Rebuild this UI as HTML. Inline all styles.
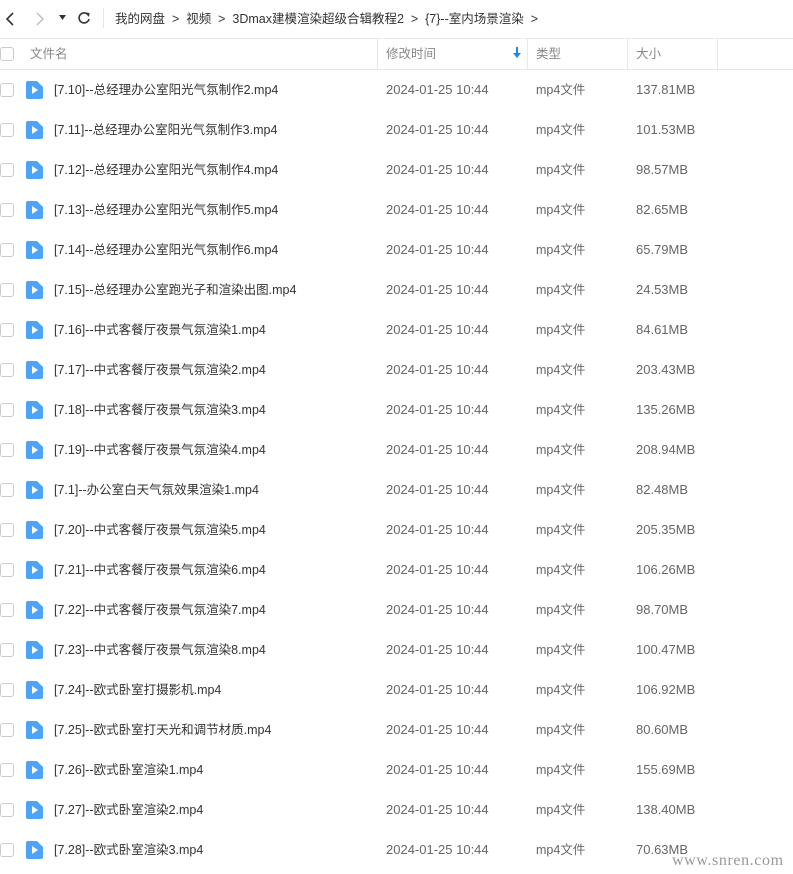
<!DOCTYPE html>
<html><head><meta charset="utf-8"><style>
body{margin:0;width:793px;height:874px;background:#fff;font-family:"Liberation Sans","Noto Sans CJK SC",sans-serif;font-size:13px;color:#333;position:relative;overflow:hidden}
.a{position:absolute;white-space:nowrap}
.bc{top:9px;height:20px;line-height:20px;font-size:12.5px;color:#333}
.hd{position:absolute;top:38px;left:0;width:793px;height:30px;border-top:1px solid #e8e8e8;border-bottom:1px solid #e8e8e8}
.sep{position:absolute;top:38px;width:1px;height:31px;background:#e8e8e8}
.hl{top:44px;height:20px;line-height:20px;color:#888;font-size:12.5px}
.cb{position:absolute;left:0;width:12px;height:12px;border:1px solid #ccc;border-radius:3px;background:#fff}
.row{position:absolute;left:0;width:793px;height:40px}
.row span{position:absolute;top:0;line-height:39px;height:40px;white-space:nowrap}
.row span.n,.row span.t{top:1px}
.row span.d,.row span.s{top:0px}
.n{left:54px;color:#333;font-size:12.5px}.d{left:386px;color:#666}.t{left:536px;color:#666;font-size:12.5px}.s{left:636px;color:#666}
</style></head><body>
<svg class="a" style="left:4px;top:11px" width="12" height="16"><path d="M9 2L3 8l6 6" stroke="#333" stroke-width="1.6" fill="none"/></svg>
<svg class="a" style="left:34px;top:11px" width="12" height="16"><path d="M3 2l6 6-6 6" stroke="#bbb" stroke-width="1.4" fill="none"/></svg>
<svg class="a" style="left:59px;top:15px" width="8" height="6"><path d="M0 0h7l-3.5 5z" fill="#333"/></svg>
<svg class="a" style="left:77px;top:11px" width="14" height="14"><path d="M11.5 4.5A5 5 0 1 0 12 8" stroke="#333" stroke-width="1.6" fill="none"/><path d="M8.5 1.5l4 .5-.5 4z" fill="#333"/></svg>
<div class="a" style="left:103px;top:8px;width:1px;height:20px;background:#e3e3e3"></div>
<div class="a bc" style="left:115px">我的网盘 &nbsp;&gt;&nbsp; 视频 &nbsp;&gt;&nbsp; 3Dmax建模渲染超级合辑教程2 &nbsp;&gt;&nbsp; {7}--室内场景渲染 &nbsp;&gt;</div>
<div class="hd"></div>
<div class="sep" style="left:377px"></div><div class="sep" style="left:527px"></div><div class="sep" style="left:627px"></div><div class="sep" style="left:717px"></div>
<div class="cb" style="top:47px"></div>
<div class="a hl" style="left:30px">文件名</div>
<div class="a hl" style="left:386px">修改时间</div>
<svg class="a" style="left:513px;top:47px" width="8" height="12"><path d="M4 0v8" stroke="#1e88e5" stroke-width="2"/><path d="M0 6h8l-4 5z" fill="#1e88e5"/></svg>
<div class="a hl" style="left:536px">类型</div>
<div class="a hl" style="left:636px">大小</div>
<div id="rows"></div>
<div class="a" style="left:672px;top:852px;font-family:'Liberation Serif',serif;font-size:16px;letter-spacing:0.6px;color:#999">www.snren.com</div>
<script>
var f=[["[7.10]--总经理办公室阳光气氛制作2.mp4","137.81MB"],["[7.11]--总经理办公室阳光气氛制作3.mp4","101.53MB"],["[7.12]--总经理办公室阳光气氛制作4.mp4","98.57MB"],["[7.13]--总经理办公室阳光气氛制作5.mp4","82.65MB"],["[7.14]--总经理办公室阳光气氛制作6.mp4","65.79MB"],["[7.15]--总经理办公室跑光子和渲染出图.mp4","24.53MB"],["[7.16]--中式客餐厅夜景气氛渲染1.mp4","84.61MB"],["[7.17]--中式客餐厅夜景气氛渲染2.mp4","203.43MB"],["[7.18]--中式客餐厅夜景气氛渲染3.mp4","135.26MB"],["[7.19]--中式客餐厅夜景气氛渲染4.mp4","208.94MB"],["[7.1]--办公室白天气氛效果渲染1.mp4","82.48MB"],["[7.20]--中式客餐厅夜景气氛渲染5.mp4","205.35MB"],["[7.21]--中式客餐厅夜景气氛渲染6.mp4","106.26MB"],["[7.22]--中式客餐厅夜景气氛渲染7.mp4","98.70MB"],["[7.23]--中式客餐厅夜景气氛渲染8.mp4","100.47MB"],["[7.24]--欧式卧室打摄影机.mp4","106.92MB"],["[7.25]--欧式卧室打天光和调节材质.mp4","80.60MB"],["[7.26]--欧式卧室渲染1.mp4","155.69MB"],["[7.27]--欧式卧室渲染2.mp4","138.40MB"],["[7.28]--欧式卧室渲染3.mp4","70.63MB"]];
var h="";f.forEach(function(r,i){var y=70+i*40;h+='<div class="row" style="top:'+y+'px"><div class="cb" style="top:13px"></div><svg style="position:absolute;left:26px;top:11px" width="17" height="18"><path d="M2 0h9l6 6v10a2 2 0 0 1-2 2H2a2 2 0 0 1-2-2V2a2 2 0 0 1 2-2z" fill="#4da3f7"/><path d="M6 5l6 4-6 4z" fill="#fff"/></svg><span class="n">'+r[0]+'</span><span class="d">2024-01-25 10:44</span><span class="t">mp4文件</span><span class="s">'+r[1]+'</span></div>'});
document.getElementById("rows").innerHTML=h;
</script>
</body></html>
